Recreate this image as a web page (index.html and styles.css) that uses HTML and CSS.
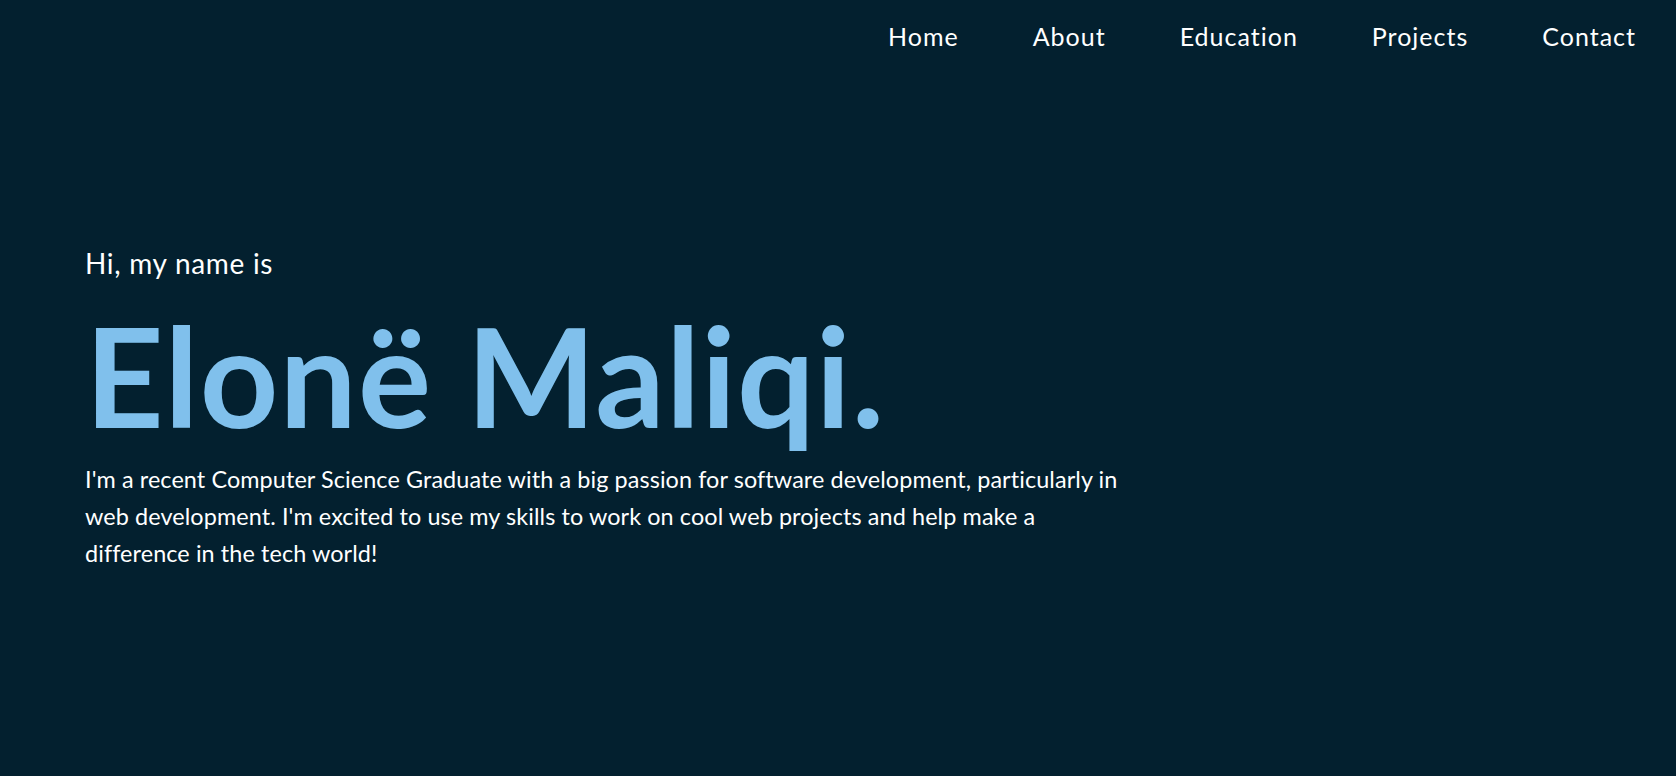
FILE: index.html
```html
<!DOCTYPE html>
<html lang="en">
<head>
<meta charset="utf-8">
<title>Elonë Maliqi</title>
<link rel="stylesheet" href="styles.css">
</head>
<body>
  <header class="site-header">
    <nav class="nav">
      <a class="nav-link" href="#home">Home</a>
      <a class="nav-link" href="#about">About</a>
      <a class="nav-link" href="#education">Education</a>
      <a class="nav-link" href="#projects">Projects</a>
      <a class="nav-link" href="#contact">Contact</a>
    </nav>
  </header>
  <main class="hero" id="home">
    <p class="hero-intro">Hi, my name is</p>
    <h1 class="hero-name">Elonë Maliqi.</h1>
    <p class="hero-text">I'm a recent Computer Science Graduate with a big passion for software development, particularly in web development. I'm excited to use my skills to work on cool web projects and help make a difference in the tech world!</p>
  </main>
</body>
</html>
```

FILE: styles.css
```css
html, body {
  margin: 0;
  padding: 0;
}

body {
  background: #03202f;
  color: #ffffff;
  font-family: "Lato", "Noto Sans", sans-serif;
  min-height: 776px;
}

.site-header {
  padding: 21px 40px 0 0;
}

.nav {
  display: flex;
  justify-content: flex-end;
  gap: 74px;
}

.nav-link {
  color: #ffffff;
  text-decoration: none;
  font-family: "Lato", sans-serif;
  font-size: 25px;
  line-height: 30px;
  letter-spacing: 1px;
}

.hero {
  padding: 195px 0 0 85px;
}

.hero-intro {
  margin: 0;
  font-family: "Lato", sans-serif;
  font-size: 28px;
  line-height: 34px;
  letter-spacing: 0.7px;
}

.hero-name {
  margin: 27px 0 0 0;
  font-family: "Lato", sans-serif;
  font-weight: 700;
  font-size: 137px;
  line-height: 137px;
  color: #80c0ec;
  letter-spacing: 1.1px;
}

.hero-text {
  margin: 17px 0 0 0;
  max-width: 1045px;
  font-family: "Lato", sans-serif;
  font-size: 23.4px;
  line-height: 37px;
  letter-spacing: 0.1px;
}
```
